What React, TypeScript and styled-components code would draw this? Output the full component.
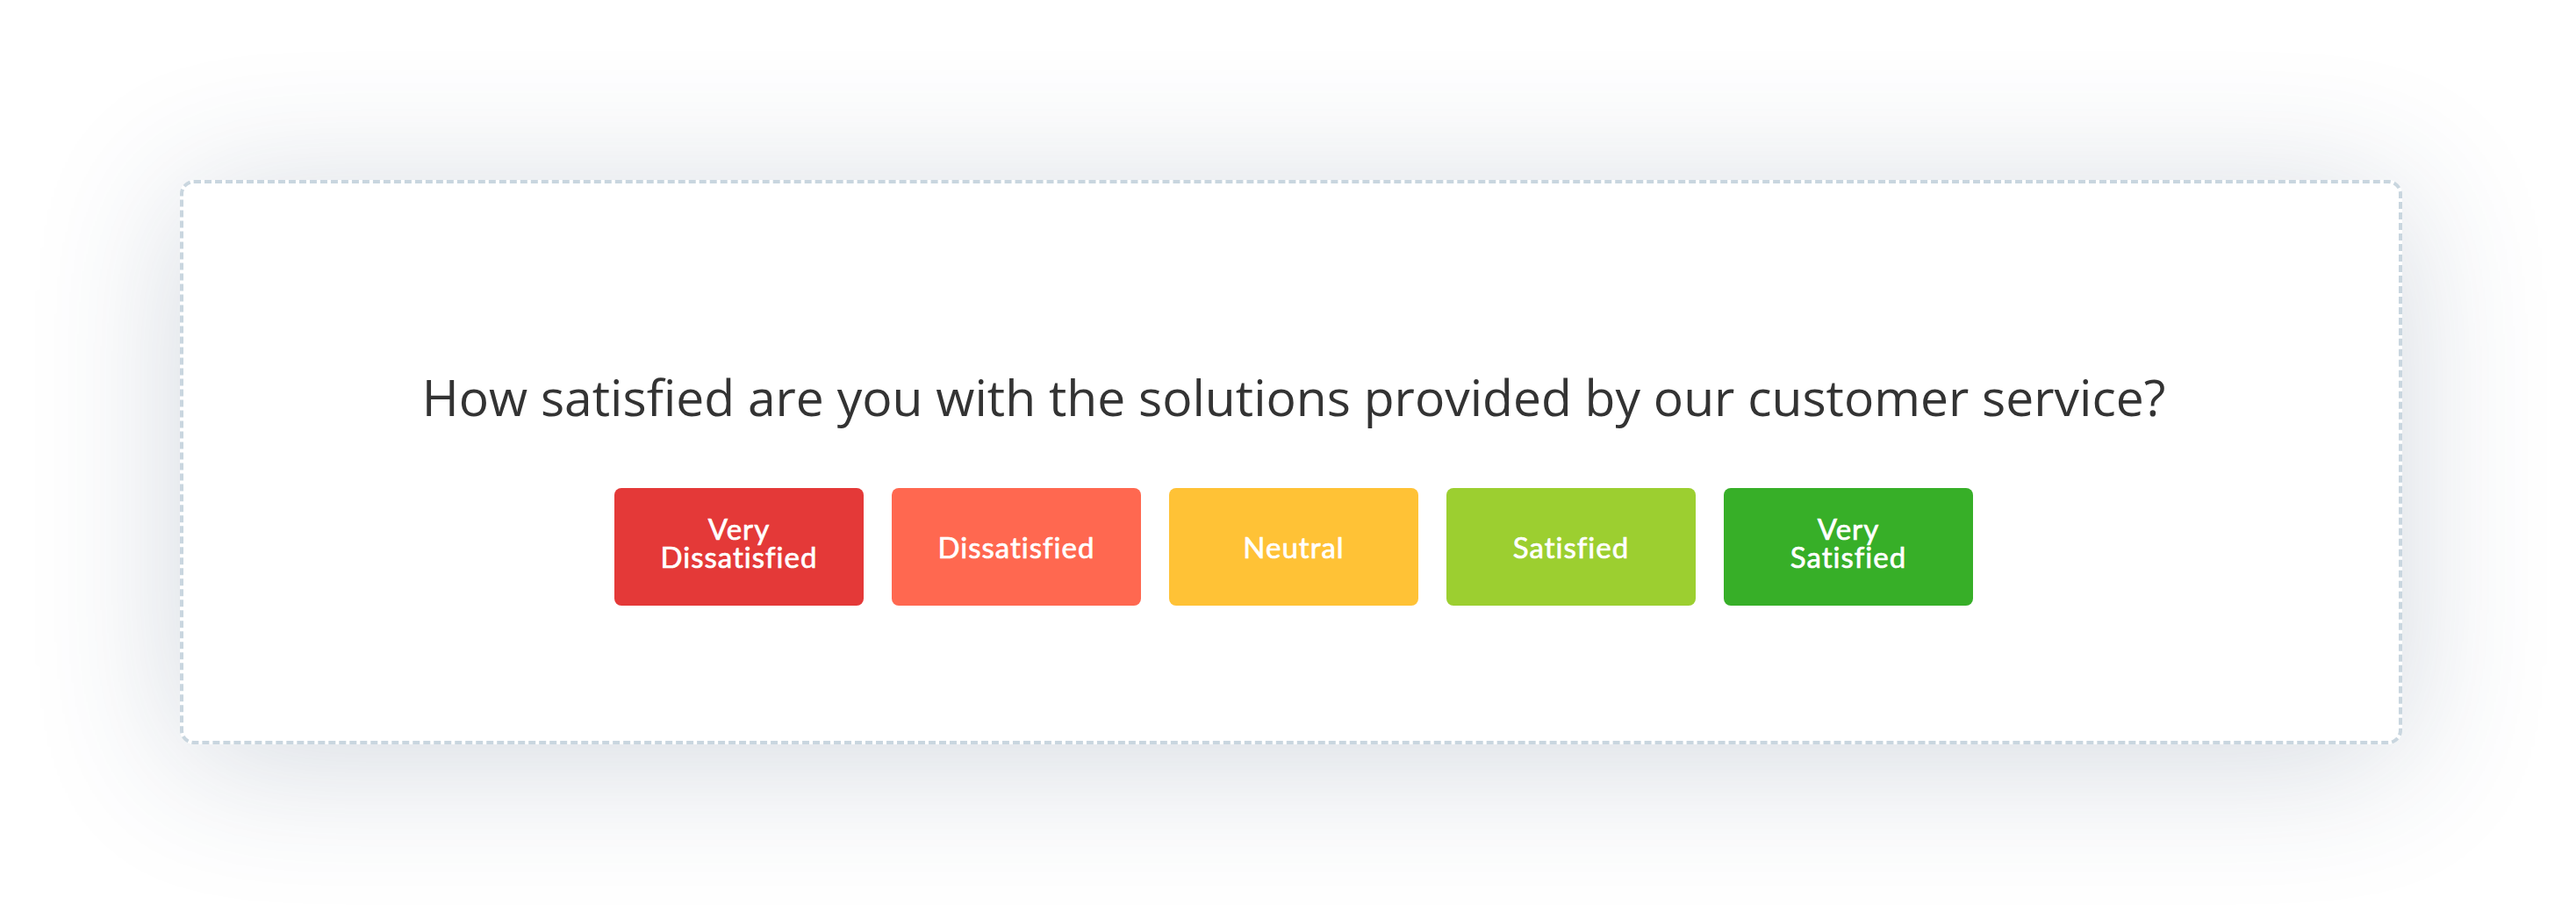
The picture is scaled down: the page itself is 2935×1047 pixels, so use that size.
import React from "react";
import styled, { createGlobalStyle } from "styled-components";

const GlobalStyle = createGlobalStyle`
  html, body {
    margin: 0;
    padding: 0;
    background: #ffffff;
  }
  body {
    font-family: "Open Sans", "Liberation Sans", sans-serif;
  }
`;

const Page = styled.div`
  width: 2935px;
  height: 1047px;
  box-sizing: border-box;
  padding: 205px 0 0 205px;
  background: #ffffff;
  overflow: hidden;
`;

const Card = styled.section`
  width: 2532px;
  height: 643px;
  box-sizing: border-box;
  border: 4px dashed #c9d6df;
  border-radius: 16px;
  background: #ffffff;
  box-shadow: 0 18px 170px rgba(40, 65, 100, 0.2);
  padding: 215px 0 0 6px;
  display: flex;
  flex-direction: column;
  align-items: center;
`;

const Question = styled.h1`
  margin: 0;
  font-family: "Open Sans", "Liberation Sans", sans-serif;
  font-weight: 400;
  font-size: 57px;
  line-height: 57px;
  color: #333333;
  white-space: nowrap;
`;

const Options = styled.div`
  margin-top: 75px;
  display: flex;
  gap: 32px;
`;

const Option = styled.button<{ $bg: string }>`
  width: 284px;
  height: 134px;
  border: none;
  border-radius: 8px;
  background: ${(p) => p.$bg};
  color: #ffffff;
  font-family: Lato, "Open Sans", sans-serif;
  font-weight: 400;
  font-size: 33px;
  line-height: 32px;
  letter-spacing: 1px;
  -webkit-text-stroke: 0.7px #ffffff;
  display: flex;
  align-items: center;
  justify-content: center;
  text-align: center;
  padding: 0 20px;
  cursor: pointer;
`;

const Label = styled.span<{ $multi: boolean }>`
  display: block;
  margin-top: ${(p) => (p.$multi ? "-11px" : "0")};
`;

const options = [
  { label: ["Very", "Dissatisfied"], bg: "#e43938" },
  { label: ["Dissatisfied"], bg: "#ff6850" },
  { label: ["Neutral"], bg: "#ffc236" },
  { label: ["Satisfied"], bg: "#9ccf30" },
  { label: ["Very", "Satisfied"], bg: "#37af28" },
];

export default function App() {
  return (
    <>
      <GlobalStyle />
      <Page>
        <Card>
          <Question>
            How satisfied are you with the solutions provided by our customer service?
          </Question>
          <Options>
            {options.map((o) => (
              <Option key={o.label.join(" ")} $bg={o.bg}>
                <Label $multi={o.label.length > 1}>
                  {o.label.map((l, i) => (
                    <React.Fragment key={l}>
                      {i > 0 && <br />}
                      {l}
                    </React.Fragment>
                  ))}
                </Label>
              </Option>
            ))}
          </Options>
        </Card>
      </Page>
    </>
  );
}
